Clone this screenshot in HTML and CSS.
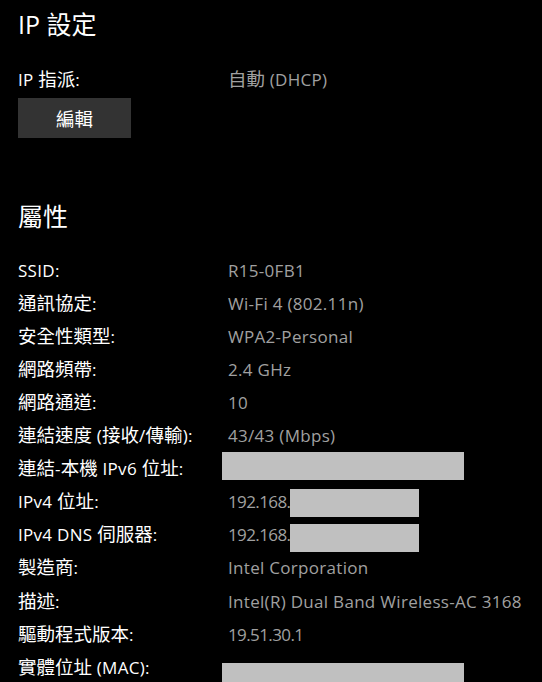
FILE: index.html
```html
<!DOCTYPE html>
<html lang="zh-Hant">
<head>
<meta charset="utf-8">
<title>IP 設定</title>
<link rel="stylesheet" href="styles.css">
</head>
<body>
<main class="page">
  <section class="ip-settings">
    <h2 class="title">IP <span class="cjt">設定</span></h2>
    <div class="grid">
      <div class="label">IP <span class="cj">指派</span>:</div>
      <div class="value"><span class="cj">自動</span> (DHCP)</div>
    </div>
    <button class="btn"><span class="cj">編輯</span></button>
  </section>

  <section class="props">
    <h2 class="title"><span class="cjt">屬性</span></h2>
    <div class="grid list">
      <div class="label">SSID:</div>
      <div class="value">R15-0FB1</div>

      <div class="label"><span class="cj">通訊協定</span>:</div>
      <div class="value">Wi-Fi 4 (802.11n)</div>

      <div class="label"><span class="cj">安全性類型</span>:</div>
      <div class="value">WPA2-Personal</div>

      <div class="label"><span class="cj">網路頻帶</span>:</div>
      <div class="value">2.4 GHz</div>

      <div class="label"><span class="cj">網路通道</span>:</div>
      <div class="value">10</div>

      <div class="label"><span class="cj">連結速度</span> (<span class="cj">接收</span>/<span class="cj">傳輸</span>):</div>
      <div class="value">43/43 (Mbps)</div>

      <div class="label"><span class="cj">連結</span>-<span class="cj">本機</span> IPv6 <span class="cj">位址</span>:</div>
      <div class="value"><span class="redact redact-wide r-v6"></span></div>

      <div class="label">IPv4 <span class="cj">位址</span>:</div>
      <div class="value"><span class="num">192.168.</span><span class="redact redact-short r-v4"></span></div>

      <div class="label">IPv4 DNS <span class="cj">伺服器</span>:</div>
      <div class="value"><span class="num">192.168.</span><span class="redact redact-short r-dns"></span></div>

      <div class="label"><span class="cj">製造商</span>:</div>
      <div class="value">Intel Corporation</div>

      <div class="label"><span class="cj">描述</span>:</div>
      <div class="value">Intel(R) Dual Band Wireless-AC 3168</div>

      <div class="label"><span class="cj">驅動程式版本</span>:</div>
      <div class="value"><span class="num">19.51.30.1</span></div>

      <div class="label"><span class="cj">實體位址</span> (MAC):</div>
      <div class="value"><span class="redact redact-wide r-mac"></span></div>
    </div>
  </section>
</main>
</body>
</html>
```

FILE: styles.css
```css
html, body {
  margin: 0;
  padding: 0;
  background: #000;
  height: 100%;
  overflow: hidden;
}

.page {
  padding: 8px 0 0 18px;
  font-family: "Open Sans", "Noto Sans CJK TC", sans-serif;
  font-size: 17px;
  letter-spacing: 0.3px;
  color: #fff;
}

.cj {
  font-family: "Noto Sans CJK TC", sans-serif;
  font-size: 18.5px;
  line-height: 1;
  letter-spacing: 0;
}

.cjt {
  font-family: "Noto Sans CJK TC", sans-serif;
  line-height: 1;
  letter-spacing: 0;
}

.title {
  margin: 0;
  font-size: 25px;
  font-weight: 400;
  line-height: 32px;
  letter-spacing: 0;
  color: #fff;
}

.grid {
  display: grid;
  grid-template-columns: 210px 1fr;
  grid-auto-rows: 33.1px;
  margin-top: 23px;
}

.label,
.value {
  line-height: 33px;
  white-space: nowrap;
}

.value {
  color: #a0a0a0;
}

.num {
  letter-spacing: -0.6px;
}

.btn {
  display: block;
  margin-top: 2px;
  width: 113px;
  height: 40px;
  border: 0;
  padding: 0;
  background: #333;
  color: #fff;
  font-family: "Noto Sans CJK TC", sans-serif;
  font-size: 19px;
  line-height: 40px;
}

.props {
  margin-top: 62px;
}

.list {
  margin-top: 21.5px;
}

.redact {
  display: inline-block;
  vertical-align: top;
  position: relative;
  height: 28px;
  background: #c0c0c0;
}

.redact-wide {
  width: 242px;
  margin-left: -6px;
}

.redact-short {
  width: 129px;
}

.r-v6 { top: 0; }
.r-v4 { top: 4px; }
.r-dns { top: 6px; }
.r-mac { top: 12px; height: 30px; }
```
